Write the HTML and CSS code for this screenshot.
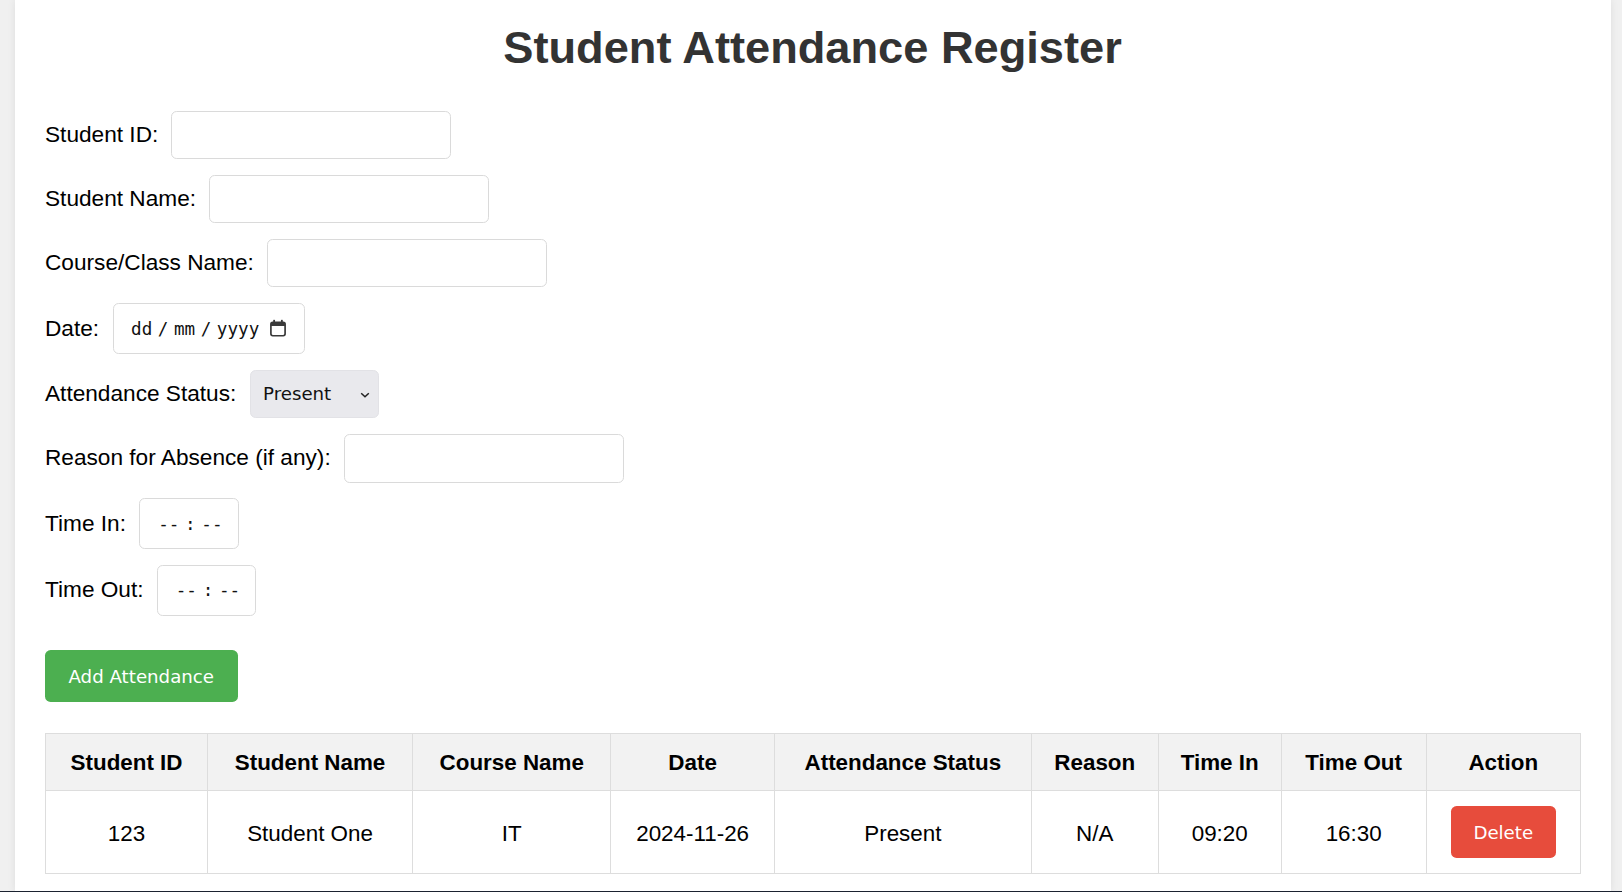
FILE: index.html
```html
<!DOCTYPE html>
<html lang="en">
<head>
<meta charset="utf-8">
<title>Student Attendance Register</title>
<link rel="stylesheet" href="styles.css">
</head>
<body>
<div class="container">
  <h1 class="title">Student Attendance Register</h1>
  <form class="form">
    <div class="row">
      <label class="label">Student ID:</label>
      <input class="field text" type="text">
    </div>
    <div class="row">
      <label class="label">Student Name:</label>
      <input class="field text" type="text">
    </div>
    <div class="row">
      <label class="label">Course/Class Name:</label>
      <input class="field text" type="text">
    </div>
    <div class="row">
      <label class="label">Date:</label>
      <div class="field date">
        <span class="seg seg-dd">dd</span><span class="sep">/</span><span class="seg seg-mm">mm</span><span class="sep">/</span><span class="seg seg-yy">yyyy</span>
        <svg class="cal" width="18" height="18" viewBox="0 0 17 17" aria-hidden="true">
          <rect x="1.8" y="3.2" width="13.4" height="12.6" rx="1.8" fill="none" stroke="#3a3a3a" stroke-width="1.6"/>
          <rect x="1.8" y="3.2" width="13.4" height="3.4" fill="#3a3a3a"/>
          <rect x="4" y="0.8" width="1.7" height="3" fill="#3a3a3a"/>
          <rect x="11.3" y="0.8" width="1.7" height="3" fill="#3a3a3a"/>
        </svg>
      </div>
    </div>
    <div class="row">
      <label class="label">Attendance Status:</label>
      <div class="field select">
        <span class="select-text">Present</span>
        <svg class="chev" width="10" height="6" viewBox="0 0 10 6" aria-hidden="true">
          <path d="M1.2 1.2 L5 4.8 L8.8 1.2" fill="none" stroke="#222" stroke-width="1.5"/>
        </svg>
      </div>
    </div>
    <div class="row">
      <label class="label">Reason for Absence (if any):</label>
      <input class="field text" type="text">
    </div>
    <div class="row">
      <label class="label">Time In:</label>
      <div class="field time"><span class="seg">--</span><span class="tsep">:</span><span class="seg">--</span></div>
    </div>
    <div class="row">
      <label class="label">Time Out:</label>
      <div class="field time"><span class="seg">--</span><span class="tsep">:</span><span class="seg">--</span></div>
    </div>
    <div class="actions">
      <button type="button" class="btn btn-add">Add Attendance</button>
    </div>
  </form>

  <table class="table">
    <colgroup>
      <col class="c1"><col class="c2"><col class="c3"><col class="c4"><col class="c5"><col class="c6"><col class="c7"><col class="c8"><col class="c9">
    </colgroup>
    <thead>
      <tr>
        <th>Student ID</th>
        <th>Student Name</th>
        <th>Course Name</th>
        <th>Date</th>
        <th>Attendance Status</th>
        <th>Reason</th>
        <th>Time In</th>
        <th>Time Out</th>
        <th>Action</th>
      </tr>
    </thead>
    <tbody>
      <tr>
        <td>123</td>
        <td>Student One</td>
        <td>IT</td>
        <td>2024-11-26</td>
        <td>Present</td>
        <td>N/A</td>
        <td>09:20</td>
        <td>16:30</td>
        <td class="cell-action"><button type="button" class="btn btn-delete">Delete</button></td>
      </tr>
    </tbody>
  </table>
</div>
<div class="edge"></div>
</body>
</html>
```

FILE: styles.css
```css
* { box-sizing: border-box; }

html, body {
  margin: 0;
  padding: 0;
}

body {
  background: #f0f0f0;
  font-family: "Liberation Sans", Arial, sans-serif;
  color: #000;
  overflow: hidden;
}

.container {
  margin: 0 11px 0 15px;
  padding: 22px 31px 0 30px;
  background: #fff;
  min-height: 100vh;
  box-shadow: 0 0 8px rgba(0, 0, 0, 0.08);
}

.title {
  margin: 0 0 37px;
  font-size: 45.2px;
  font-weight: bold;
  line-height: 51.5px;
  text-align: center;
  color: #333;
}

.form {
  display: flex;
  flex-direction: column;
  gap: 15.6px;
}

.row {
  display: flex;
  align-items: center;
  gap: 13.2px;
}

.label {
  font-size: 22.65px;
  line-height: 26px;
  padding-bottom: 2px;
  white-space: nowrap;
}

.field {
  border: 1px solid #dadada;
  border-radius: 5.6px;
  background: #fff;
  font-family: "DejaVu Sans", sans-serif;
  font-size: 18.2px;
  color: #111;
}

.text {
  width: 280px;
  height: 48.6px;
  padding: 0 14px;
}

.date {
  width: 192px;
  height: 51px;
  display: flex;
  align-items: center;
  padding-left: 17px;
  margin-left: 0.8px;
}

.seg {
  font-family: "DejaVu Sans Mono", monospace;
  font-size: 17.6px;
  line-height: 20px;
}

.sep {
  font-family: "DejaVu Sans Mono", monospace;
  font-size: 17.6px;
  line-height: 20px;
  width: 21.7px;
  text-align: center;
}

.cal {
  margin-left: 9.5px;
  margin-top: -2px;
}

.select {
  width: 129.4px;
  height: 48.7px;
  background: #e9e9ed;
  border-color: #e2e2e6;
  display: flex;
  align-items: center;
  justify-content: space-between;
  padding: 0 8px 0 12.5px;
}

.select-text {
  font-size: 18.2px;
  line-height: 22px;
}

.chev {
  margin-top: 1px;
}

.time {
  width: 99.5px;
  height: 51px;
  display: flex;
  align-items: center;
  padding-left: 18px;
}

.tsep {
  font-family: "DejaVu Sans Mono", monospace;
  font-size: 17.6px;
  line-height: 20px;
  width: 22px;
  text-align: center;
}

.actions {
  margin-top: 18.4px;
}

.btn {
  border: none;
  border-radius: 5.6px;
  color: #fff;
  font-family: "DejaVu Sans", sans-serif;
  font-size: 18.2px;
  line-height: 21px;
  height: 52.7px;
  cursor: pointer;
}

.btn-add {
  background: #4caf50;
  padding: 0 23.5px;
}

.btn-delete {
  background: #e74c3c;
  padding: 0 22.5px;
  vertical-align: middle;
}

.table {
  width: 100%;
  margin-top: 30.3px;
  border-collapse: collapse;
  table-layout: fixed;
  font-size: 22.4px;
  line-height: 26px;
}

.c1 { width: 162.1px; }
.c2 { width: 204.9px; }
.c3 { width: 198.5px; }
.c4 { width: 163.3px; }
.c5 { width: 257.1px; }
.c6 { width: 126.8px; }
.c7 { width: 123.1px; }
.c8 { width: 144.8px; }
.c9 { width: 154.4px; }

.table th,
.table td {
  border: 1px solid #ddd;
  text-align: center;
  vertical-align: middle;
}

.table th {
  background: #f2f2f2;
  font-weight: bold;
  padding: 16px 4px 14px;
}

.table td {
  padding: 17px 4px 13px;
}

.table td.cell-action {
  padding: 15px 4px;
}

.edge {
  position: fixed;
  left: 0;
  right: 0;
  bottom: 0;
  height: 1px;
  background: #1b2230;
}
```
